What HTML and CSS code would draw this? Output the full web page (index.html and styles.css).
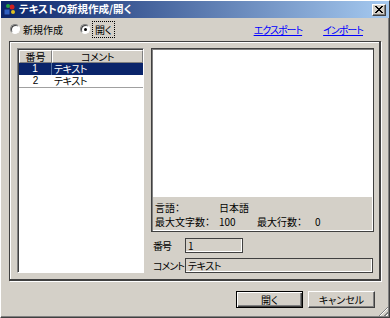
FILE: index.html
```html
<!DOCTYPE html>
<html lang="ja">
<head>
  <meta charset="UTF-8" />
  <title>テキストの新規作成/開く</title>
  <link rel="stylesheet" href="styles.css">
</head>
<body>
  <div class="window">
    <div class="titlebar">
      <svg class="app-icon" width="13" height="13" viewBox="0 0 13 13">
        <rect x="1" y="6" width="6" height="6" fill="#3060c0" stroke="#102060" stroke-width="1"/>
        <circle cx="9" cy="4" r="2.5" fill="#d02020"/>
        <circle cx="5" cy="3" r="2" fill="#20a040"/>
        <circle cx="10" cy="9" r="2" fill="#e0c020"/>
      </svg>
      <span class="title">テキストの新規作成/開く</span>
      <span class="close-btn">
        <svg width="8" height="7" viewBox="0 0 8 7"><path d="M0 0L7 7M1 0L8 7M7 0L0 7M8 0L1 7" stroke="#000" stroke-width="1"/></svg>
      </span>
    </div>

    <div class="toolbar">
      <label class="radio"><span class="radio-dot"></span><span>新規作成</span></label>
      <label class="radio checked"><span class="radio-dot"></span><span class="focus">開く</span></label>
      <a href="#" class="link export">エクスポート</a>
      <a href="#" class="link">インポート</a>
    </div>

    <div class="frame">
      <div class="list">
        <div class="list-head">
          <span class="col-no">番号</span>
          <span class="col-comment">コメント</span>
        </div>
        <div class="list-row selected">
          <span class="col-no">1</span>
          <span class="col-comment">テキスト</span>
        </div>
        <div class="list-row last">
          <span class="col-no">2</span>
          <span class="col-comment">テキスト</span>
        </div>
      </div>

      <div class="side">
        <div class="preview">
          <div class="preview-area"></div>
          <div class="info">
            <div class="info-row"><span class="key">言語：</span><span>日本語</span></div>
            <div class="info-row">
              <span class="key">最大文字数：</span><span class="val">100</span>
              <span class="key2">最大行数：</span><span>0</span>
            </div>
          </div>
        </div>
        <div class="field">
          <span class="field-label">番号</span>
          <span class="field-box short">1</span>
        </div>
        <div class="field">
          <span class="field-label">コメント</span>
          <span class="field-box">テキスト</span>
        </div>
      </div>
    </div>

    <div class="buttons">
      <button class="btn default">開く</button>
      <button class="btn">キャンセル</button>
    </div>
    <div class="grip"></div>
  </div>
</body>
</html>
```

FILE: styles.css
```css
body {
  margin: 0;
  background: #d4d0c8;
  font-family: "Noto Sans CJK JP", "DejaVu Sans", sans-serif;
  font-size: 10px;
  font-feature-settings: "palt";
  color: #000;
}
.window {
  position: relative;
  width: 390px;
  height: 318px;
  box-sizing: border-box;
  border-left: 1px solid #fff;
  border-top: 1px solid #fff;
  border-right: 1px solid #404040;
  border-bottom: 1px solid #404040;
  box-shadow: inset -1px -1px #808080;
}
.titlebar {
  height: 17px;
  display: flex;
  align-items: center;
  padding: 0 3px 0 2px;
  background: linear-gradient(90deg, #0a246a, #a6caf0);
}
.app-icon {
  margin-right: 3px;
}
.title {
  color: #fff;
  font-weight: bold;
  font-size: 10.5px;
  flex: 1;
  line-height: 1;
}
.close-btn {
  width: 14px;
  height: 12px;
  box-sizing: border-box;
  display: flex;
  align-items: center;
  justify-content: center;
  background: #d4d0c8;
  border: 1px solid;
  border-color: #fff #404040 #404040 #fff;
  box-shadow: inset -1px -1px #808080;
}
.toolbar {
  display: flex;
  align-items: center;
  height: 14px;
  margin-top: 4px;
  padding-left: 9px;
}
.radio {
  display: flex;
  align-items: center;
  margin-right: 17px;
}
.radio-dot {
  width: 10px;
  height: 10px;
  box-sizing: border-box;
  border-radius: 50%;
  background: #fff;
  border: 1px solid;
  border-color: #808080 #fff #fff #808080;
  box-shadow: inset 1px 1px #404040;
  margin-right: 3px;
  position: relative;
}
.checked .radio-dot::after {
  content: "";
  position: absolute;
  left: 3px;
  top: 3px;
  width: 3px;
  height: 3px;
  border-radius: 50%;
  background: #000;
}
.focus {
  outline: 1px dotted #000;
  padding: 0 2px;
}
.link {
  color: #0000ff;
  text-decoration: underline;
  letter-spacing: -1px;
}
.export {
  margin-left: auto;
  margin-right: 21px;
}
.toolbar .link:last-child {
  margin-right: 26px;
}
.frame {
  display: flex;
  margin: 5px 0 0 8px;
  width: 372px;
  height: 240px;
  box-sizing: border-box;
  border: 1px solid;
  border-width: 1px 2px 2px 1px;
  border-color: #404040;
  box-shadow: inset 1px 1px #fff, 1px 1px #fff;
  padding: 6px 5px 6px 7px;
}
.list {
  width: 127px;
  height: 225px;
  box-sizing: border-box;
  background: #fff;
  border: 1px solid;
  border-color: #808080 #fff #fff #808080;
  box-shadow: inset 1px 1px #404040;
  padding: 1px 0 0 1px;
}
.list-head, .list-row {
  display: flex;
  height: 13px;
  line-height: 13px;
}
.list-head span {
  background: #d4d0c8;
  text-align: center;
  box-sizing: border-box;
  border: 1px solid;
  border-color: #fff #808080 #808080 #fff;
  line-height: 11px;
}
.list-row {
  height: 12px;
  line-height: 12px;
}
.list-row .col-no {
  font-family: "Liberation Sans", sans-serif;
}
.list-row .col-comment {
  letter-spacing: -0.5px;
}
.list-row.last {
  border-bottom: 1px solid #a0a0a0;
}
.col-no {
  width: 33px;
  text-align: center;
}
.col-comment {
  flex: 1;
  padding-left: 2px;
}
.list-head .col-comment {
  padding-left: 0;
  letter-spacing: -0.5px;
}
.selected {
  background: #0a246a;
  color: #fff;
}
.selected .col-no {
  border-right: 1px solid #5070a0;
  box-sizing: border-box;
}
.side {
  margin-left: 7px;
  width: 223px;
}
.preview {
  height: 184px;
  box-sizing: border-box;
  border: 1px solid #404040;
  box-shadow: inset 1px 1px #808080, inset -1px -1px #fff;
  padding: 1px;
}
.preview-area {
  height: 147px;
  background: #fff;
}
.info {
  padding: 4px 0 0 2px;
}
.info-row {
  height: 14px;
  line-height: 14px;
  display: flex;
}
.key {
  width: 64px;
}
.val {
  width: 38px;
}
.key2 {
  width: 58px;
}
.field {
  display: flex;
  align-items: center;
  margin-top: 5px;
  height: 16px;
}
.field + .field {
  margin-top: 4px;
}
.field-label {
  width: 32px;
  padding-left: 2px;
  white-space: nowrap;
  letter-spacing: -1px;
}
.field-box {
  flex: 1;
  height: 15px;
  box-sizing: border-box;
  border: 1px solid #404040;
  box-shadow: inset -1px -1px #fff;
  line-height: 13px;
  padding-left: 2px;
  margin-right: 1px;
  letter-spacing: -0.5px;
}
.field-box.short {
  flex: none;
  width: 58px;
}
.buttons {
  display: flex;
  justify-content: flex-end;
  gap: 5px;
  margin: 10px 14px 0 0;
}
.btn {
  width: 67px;
  height: 17px;
  box-sizing: border-box;
  background: #d4d0c8;
  font: inherit;
  color: #000;
  padding: 0;
  border: 1px solid;
  border-color: #fff #404040 #404040 #fff;
  box-shadow: inset -1px -1px #808080;
}
.btn.default {
  border: 1px solid #000;
  box-shadow: inset 1px 1px #fff, inset -1px -1px #404040, inset -2px -2px #808080;
}
.grip {
  position: absolute;
  right: 1px;
  bottom: 1px;
  width: 12px;
  height: 12px;
  background: repeating-linear-gradient(135deg, transparent 0 2px, #808080 2px 3px, #fff 3px 4px);
  clip-path: polygon(100% 0, 100% 100%, 0 100%);
}
```
